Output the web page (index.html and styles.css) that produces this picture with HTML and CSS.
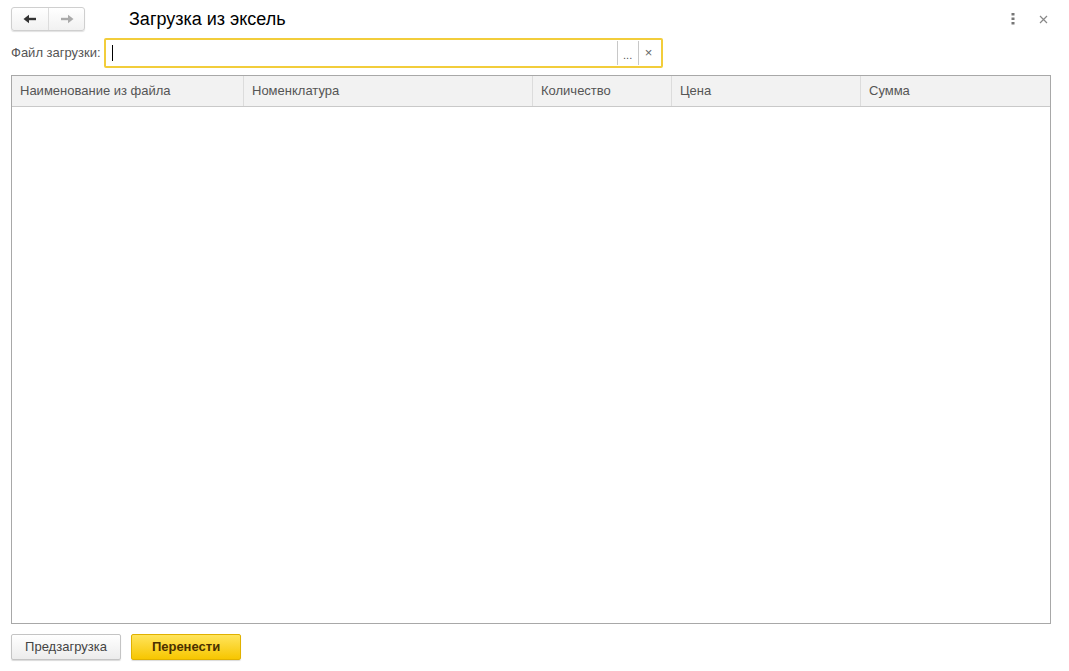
FILE: index.html
```html
<!DOCTYPE html>
<html lang="ru">
<head>
    <meta charset="UTF-8">
    <title>Загрузка из эксель</title>
    <link rel="stylesheet" href="styles.css">
</head>
<body>
    <div class="header">
        <div class="navButtons">
            <button class="navButton">
                <svg width="14" height="10" viewBox="0 0 14 10"><path d="M5 5h8" stroke="#333" stroke-width="2.4"/><path d="M0.5 5L6 0.8v8.4z" fill="#333"/></svg>
            </button>
            <button class="navButton">
                <svg width="14" height="10" viewBox="0 0 14 10"><path d="M1 5h8" stroke="#aaa" stroke-width="2.4"/><path d="M13.5 5L8 0.8v8.4z" fill="#aaa"/></svg>
            </button>
        </div>
        <div class="title">Загрузка из эксель</div>
        <div class="windowIcons">
            <span class="more">
                <svg width="4" height="12" viewBox="0 0 4 12"><rect x="0.5" y="0" width="3" height="2.5" fill="#777"/><rect x="0.5" y="4.5" width="3" height="2.5" fill="#777"/><rect x="0.5" y="9" width="3" height="2.5" fill="#777"/></svg>
            </span>
            <span class="close">
                <svg width="9" height="9" viewBox="0 0 9 9"><path d="M1 1l7 7M8 1L1 8" stroke="#888" stroke-width="1.2"/></svg>
            </span>
        </div>
    </div>

    <div class="fieldRow">
        <label class="fieldLabel">Файл загрузки:</label>
        <div class="fileInput">
            <div class="inputText"><span class="caret"></span></div>
            <div class="inputButton">...</div>
            <div class="inputButton clear">×</div>
        </div>
    </div>

    <div class="table">
        <div class="tableHead">
            <div class="col col1">Наименование из файла</div>
            <div class="col col2">Номенклатура</div>
            <div class="col col3">Количество</div>
            <div class="col col4">Цена</div>
            <div class="col col5">Сумма</div>
        </div>
        <div class="tableBody"></div>
    </div>

    <div class="footer">
        <button class="button">Предзагрузка</button>
        <button class="button primary">Перенести</button>
    </div>
</body>
</html>
```

FILE: styles.css
```css
body {
    margin: 0;
    width: 1069px;
    height: 671px;
    font-family: "Liberation Sans", Arial, sans-serif;
    font-size: 13px;
    color: #555;
    background-color: #fff;
    display: flex;
    flex-direction: column;
    padding: 0 18px 0 11px;
    box-sizing: border-box;
    overflow: hidden;
}

.header {
    display: flex;
    align-items: center;
    height: 24px;
    margin-top: 7px;
}

.navButtons {
    display: flex;
    height: 22px;
    border: 1px solid #cfcfcf;
    border-radius: 3px;
    background: linear-gradient(#fff, #f1f1f1);
    box-shadow: 0 1px 1px rgba(0, 0, 0, 0.12);
}

.navButton {
    width: 36px;
    height: 22px;
    border: none;
    padding: 0;
    background: transparent;
    display: flex;
    align-items: center;
    justify-content: center;
}

.navButton + .navButton {
    border-left: 1px solid #dcdcdc;
}

.title {
    margin-left: 44px;
    font-size: 18px;
    color: #000;
    padding-top: 1px;
}

.windowIcons {
    margin-left: auto;
    display: flex;
    align-items: center;
    gap: 24px;
    padding-right: 3px;
}

.more, .close {
    display: flex;
}

.fieldRow {
    display: flex;
    align-items: center;
    margin-top: 7px;
    height: 30px;
}

.fieldLabel {
    color: #555;
    margin-right: 3px;
    padding-bottom: 2px;
}

.fileInput {
    display: flex;
    width: 559px;
    height: 30px;
    box-sizing: border-box;
    border: 2px solid #f2cd3b;
    border-radius: 2px;
    padding: 1px 2px 1px 1px;
}

.inputText {
    flex: 1;
    display: flex;
    align-items: center;
    padding-left: 5px;
}

.caret {
    width: 1px;
    height: 16px;
    background-color: #000;
}

.inputButton {
    width: 21px;
    border-left: 1px solid #c8c8c8;
    display: flex;
    align-items: flex-end;
    justify-content: center;
    padding-bottom: 4px;
    box-sizing: border-box;
    font-size: 11px;
    color: #555;
}

.inputButton.clear {
    align-items: center;
    padding-bottom: 1px;
    font-size: 13px;
    color: #666;
}

.table {
    margin-top: 7px;
    height: 549px;
    border: 1px solid #a8a8a8;
    display: flex;
    flex-direction: column;
    box-sizing: border-box;
}

.tableHead {
    display: flex;
    height: 30px;
    background-color: #f2f2f2;
    border-bottom: 1px solid #c9c9c9;
}

.col {
    display: flex;
    align-items: center;
    padding-left: 8px;
    padding-bottom: 2px;
    box-sizing: border-box;
    border-left: 1px solid #dcdcdc;
}

.col1 { width: 231px; border-left: none; }
.col2 { width: 289px; }
.col3 { width: 139px; }
.col4 { width: 189px; }
.col5 { flex: 1; }

.tableBody {
    flex: 1;
}

.footer {
    display: flex;
    gap: 10px;
    margin-top: 10px;
}

.button {
    width: 110px;
    height: 26px;
    font-family: "Liberation Sans", Arial, sans-serif;
    font-size: 13px;
    color: #444;
    border: 1px solid #c4c4c4;
    border-radius: 2px;
    background: linear-gradient(#fff, #ececec);
    box-shadow: 0 1px 1px rgba(0, 0, 0, 0.15);
    padding-bottom: 2px;
    cursor: pointer;
}

.button.primary {
    font-weight: bold;
    color: #4a3000;
    border-color: #e0b100;
    background: linear-gradient(#ffe45c, #f7c600);
}
```
